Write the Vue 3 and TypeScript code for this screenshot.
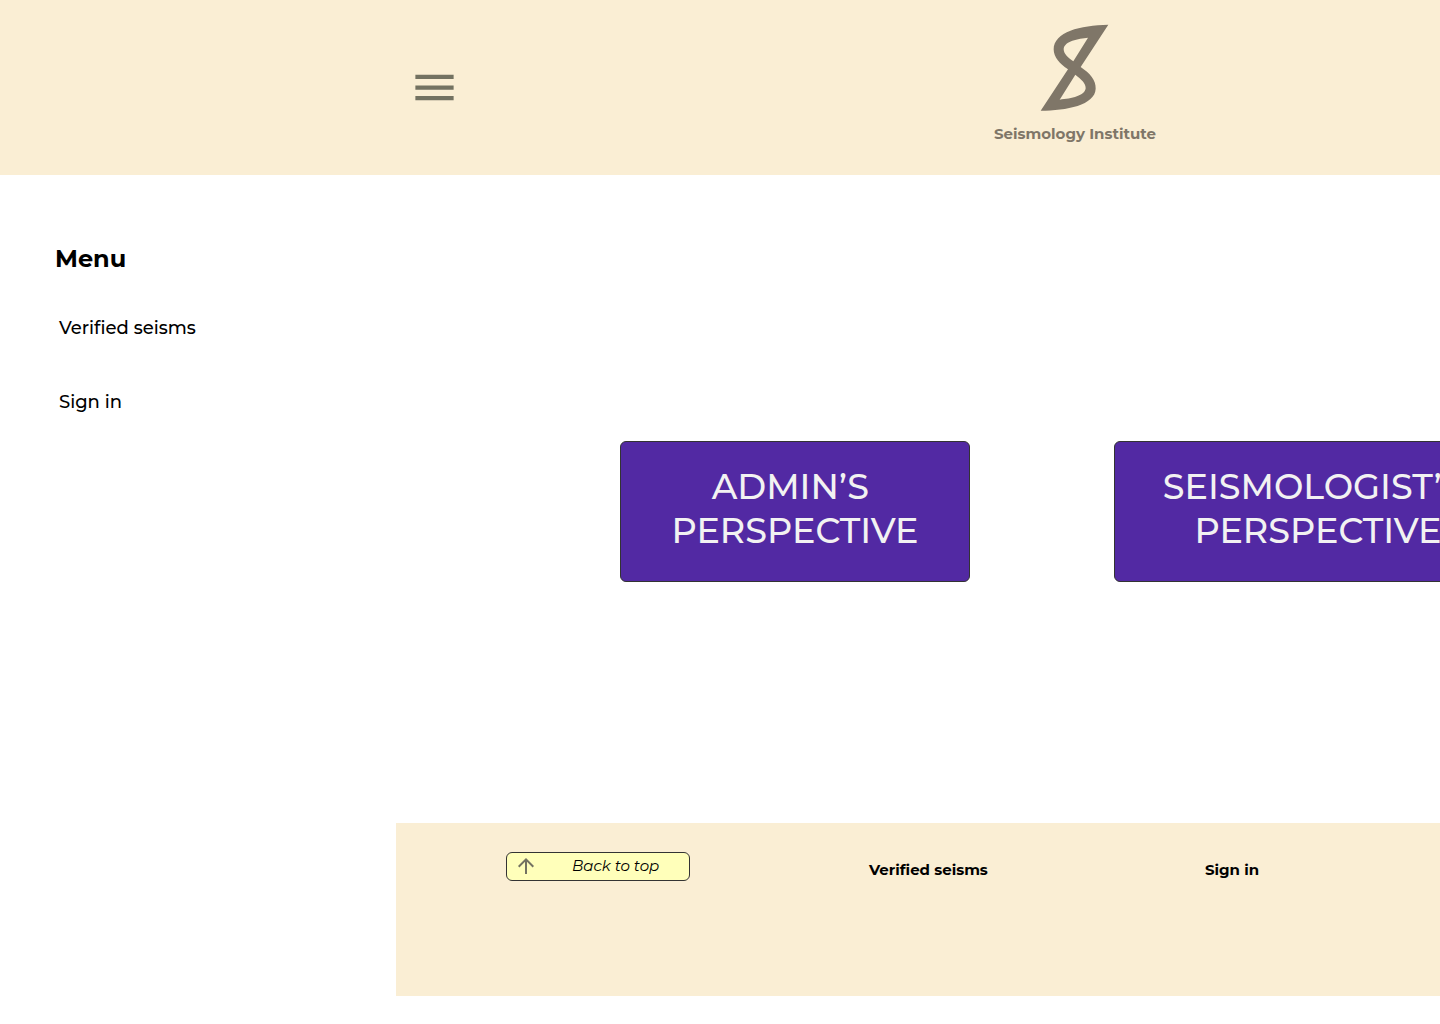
<script setup lang="ts">
interface MenuLink {
  label: string
  href: string
}

interface Perspective {
  id: string
  lines: string[]
}

const links: MenuLink[] = [
  { label: 'Verified seisms', href: '#verified-seisms' },
  { label: 'Sign in', href: '#sign-in' },
]

const perspectives: Perspective[] = [
  { id: 'admin', lines: ['ADMIN’S\u00a0', 'PERSPECTIVE'] },
  { id: 'seismologist', lines: ['SEISMOLOGIST’S\u00a0', 'PERSPECTIVE'] },
]

function scrollToTop(): void {
  window.scrollTo({ top: 0, behavior: 'smooth' })
}
</script>

<template>
  <div class="page">
    <header class="header">
      <button class="menu-toggle" type="button" aria-label="Toggle menu">
        <svg width="51" height="51" viewBox="0 0 24 24" aria-hidden="true">
          <path d="M3 18h18v-2H3v2zm0-5h18v-2H3v2zm0-7v2h18V6H3z" fill="#737261" />
        </svg>
      </button>
      <a class="brand" href="#home">
        <svg width="69" height="88" viewBox="180 42 207 264" aria-hidden="true">
          <path
            fill="#7f7668"
            fill-rule="evenodd"
            d="M385 44L302 171C330 190 348 210 347 236C345 285 260 302 182 302L264 178C240 162 221 142 221 118C222 65 300 46 385 44ZM324 83L280 154C262 142 251 130 251 117C253 93 295 86 324 83ZM286 194L239 269C275 266 315 257 317 235C318 220 303 207 286 194Z"
          />
        </svg>
        <span class="brand-name">Seismology Institute</span>
      </a>
    </header>

    <div class="body">
      <aside class="sidebar">
        <h2 class="sidebar-title">Menu</h2>
        <nav class="sidebar-nav">
          <a v-for="link in links" :key="link.href" :href="link.href">{{ link.label }}</a>
        </nav>
      </aside>

      <div class="content">
        <main class="perspectives">
          <button v-for="item in perspectives" :key="item.id" :class="['perspective', item.id]" type="button">
            <span v-for="line in item.lines" :key="line">{{ line }}</span>
          </button>
        </main>

        <footer class="footer">
          <button class="back-to-top" type="button" @click="scrollToTop">
            <svg width="24" height="24" viewBox="0 0 24 24" aria-hidden="true">
              <path d="M4 12l1.41 1.41L11 7.83V20h2V7.83l5.58 5.59L20 12l-8-8-8 8z" fill="#737261" />
            </svg>
            <span>Back to top</span>
          </button>
          <a v-for="link in links" :key="link.href" :href="link.href">{{ link.label }}</a>
        </footer>
      </div>
    </div>
  </div>
</template>

<style>
body {
  margin: 0;
  background: #fff;
}
</style>

<style scoped>
.page {
  overflow-x: hidden;
  color: #000;
  font-family: Montserrat, Inter, sans-serif;
  font-variant-ligatures: none;
}

button {
  margin: 0;
  font-family: inherit;
  cursor: pointer;
}

a {
  color: inherit;
  text-decoration: none;
}

svg {
  display: block;
  flex: none;
}

.header {
  display: flex;
  align-items: center;
  justify-content: space-between;
  box-sizing: border-box;
  min-height: 175px;
  padding: 0 284px 0 409px;
  background: #faeed4;
}

.menu-toggle {
  padding: 0;
  border: 0;
  background: none;
}

.brand {
  display: flex;
  flex-direction: column;
  align-items: center;
  gap: 12px;
  padding-bottom: 7px;
  color: #7f7668;
}

.brand-name {
  font-size: 15px;
  font-weight: 700;
  line-height: 20px;
  white-space: nowrap;
}

.body {
  display: flex;
}

.sidebar {
  flex: none;
  box-sizing: border-box;
  width: 396px;
  padding: 68px 55px;
}

.sidebar-title {
  margin: 0;
  font-size: 24px;
  font-weight: 700;
  line-height: 32px;
}

.sidebar-nav {
  display: flex;
  flex-direction: column;
  gap: 50px;
  padding: 41px 4px;
  font-size: 18px;
  font-weight: 500;
  line-height: 24px;
}

.content {
  flex: 1;
  min-width: 0;
}

.perspectives {
  display: flex;
  gap: 144px;
  padding: 266px 0 241px 224px;
}

.perspective {
  display: flex;
  flex: none;
  flex-direction: column;
  align-items: center;
  justify-content: flex-start;
  box-sizing: border-box;
  width: 350px;
  min-height: 141px;
  padding: 23px 0 28px;
  border: 1px solid #333;
  border-radius: 6px;
  background: #5229a3;
  color: #f2f2f2;
  font-size: 35px;
  font-weight: 500;
  line-height: 44px;
}

.seismologist {
  width: 408px;
}

.footer {
  display: grid;
  grid-template-columns: 363px 336px 1fr;
  align-items: start;
  box-sizing: border-box;
  min-height: 173px;
  padding: 29px 0 0 110px;
  background: #faeed4;
  font-size: 15px;
  font-weight: 700;
  line-height: 20px;
}

.footer a {
  padding-top: 8px;
}

.back-to-top {
  display: flex;
  align-items: center;
  gap: 34px;
  width: 184px;
  height: 29px;
  padding: 0 7px 1px;
  border: 1px solid #333;
  border-radius: 6px;
  background: #ffffba;
  color: #000;
  font-size: 15px;
  font-style: italic;
  font-weight: 400;
  line-height: 20px;
}
</style>
